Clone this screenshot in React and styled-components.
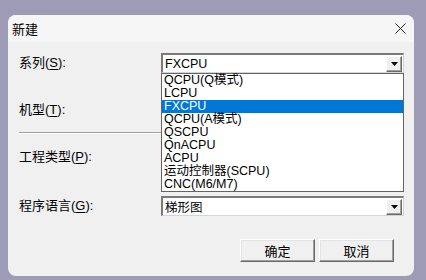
import styled, { createGlobalStyle } from 'styled-components';

const GlobalStyle = createGlobalStyle`
  html, body {
    margin: 0;
    padding: 0;
    background: #9e9bb7;
    font-family: "Liberation Sans", "Noto Sans CJK SC", sans-serif;
  }
`;

const Page = styled.div`
  width: 426px;
  height: 280px;
  padding: 15px 0 0 8px;
  box-sizing: border-box;
`;

const Dialog = styled.div`
  position: relative;
  width: 406px;
  height: 261px;
  background: #f0f0f0;
  border-radius: 8px;
  overflow: hidden;
  display: flex;
  flex-direction: column;
`;

const TitleBar = styled.div`
  height: 27px;
  display: flex;
  align-items: center;
  justify-content: space-between;
  padding: 0 8px 0 4px;
  background: #f6f6f6;
  font-size: 13px;
  color: #000;
`;

const Body = styled.div`
  display: flex;
  flex-direction: column;
  padding: 11px 10px 0 11px;
`;

const Row = styled.div`
  display: flex;
  align-items: center;
  height: 20px;
  margin-top: ${(p) => p.gap || 0}px;
`;

const Label = styled.div`
  width: 142px;
  font-size: 13px;
  color: #000;
  line-height: 20px;

  u {
    text-decoration: underline;
    text-underline-offset: 2px;
  }
`;

const Combo = styled.div`
  width: 243px;
  height: 20px;
  box-sizing: border-box;
  background: #fff;
  border-top: 2px solid #7a7a7a;
  border-left: 2px solid #7a7a7a;
  border-right: 1px solid #d4d4d4;
  border-bottom: 1px solid #d4d4d4;
  display: flex;
  align-items: center;
  justify-content: space-between;
  font-size: 12.5px;
  padding-left: 2px;
  color: #000;
`;

const ArrowButton = styled.div`
  width: 16px;
  height: 16px;
  box-sizing: border-box;
  background: #f0f0f0;
  border-top: 1px solid #fff;
  border-left: 1px solid #fff;
  border-right: 1px solid #696969;
  border-bottom: 1px solid #696969;
  box-shadow: inset -1px -1px 0 #a0a0a0;
  display: flex;
  align-items: center;
  justify-content: center;
  margin-right: 1px;
  margin-left: auto;
`;

const Separator = styled.div`
  width: 142px;
  height: 1px;
  background: #a0a0a0;
  border-bottom: 1px solid #fff;
  margin-top: 12px;
`;

const List = styled.div`
  position: absolute;
  left: 153px;
  top: 58px;
  width: 243px;
  box-sizing: border-box;
  background: #fff;
  border: 1px solid #646464;
`;

const Item = styled.div`
  height: 13px;
  line-height: 13px;
  font-size: 12.5px;
  padding-left: 2px;
  color: ${(p) => (p.active ? '#fff' : '#000')};
  background: ${(p) => (p.active ? '#0078d7' : 'transparent')};
  white-space: nowrap;
`;

const Buttons = styled.div`
  display: flex;
  justify-content: flex-end;
  gap: 4px;
  padding-right: 10px;
  margin-top: 23px;
`;

const Button = styled.div`
  width: 75px;
  height: 23px;
  box-sizing: border-box;
  background: #f0f0f0;
  border-top: 1px solid #fff;
  border-left: 1px solid #fff;
  border-right: 1px solid #696969;
  border-bottom: 1px solid #696969;
  box-shadow: inset -1px -1px 0 #a0a0a0, inset 1px 1px 0 #e3e3e3;
  display: flex;
  align-items: center;
  justify-content: center;
  font-size: 13px;
  color: #000;
`;

const Arrow = () => (
  <svg width="7" height="4" viewBox="0 0 7 4">
    <path d="M0 0H7L3.5 4Z" fill="#000" />
  </svg>
);

const Close = () => (
  <svg width="11" height="11" viewBox="0 0 11 11">
    <path d="M0.5 0.5L10.5 10.5M10.5 0.5L0.5 10.5" stroke="#222" strokeWidth="1" />
  </svg>
);

const series = [
  'QCPU(Q模式)',
  'LCPU',
  'FXCPU',
  'QCPU(A模式)',
  'QSCPU',
  'QnACPU',
  'ACPU',
  '运动控制器(SCPU)',
  'CNC(M6/M7)',
];

export default function App() {
  return (
    <Page>
      <GlobalStyle />
      <Dialog>
        <TitleBar>
          <span>新建</span>
          <Close />
        </TitleBar>
        <Body>
          <Row>
            <Label>系列(<u>S</u>):</Label>
            <Combo>
              FXCPU
              <ArrowButton><Arrow /></ArrowButton>
            </Combo>
          </Row>
          <Row gap={27}>
            <Label>机型(<u>T</u>):</Label>
            <Combo>
              <ArrowButton><Arrow /></ArrowButton>
            </Combo>
          </Row>
          <Separator />
          <Row gap={13}>
            <Label>工程类型(<u>P</u>):</Label>
            <Combo>
              <ArrowButton><Arrow /></ArrowButton>
            </Combo>
          </Row>
          <Row gap={29}>
            <Label>程序语言(<u>G</u>):</Label>
            <Combo>
              梯形图
              <ArrowButton><Arrow /></ArrowButton>
            </Combo>
          </Row>
          <Buttons>
            <Button>确定</Button>
            <Button>取消</Button>
          </Buttons>
        </Body>
        <List>
          {series.map((s) => (
            <Item key={s} active={s === 'FXCPU'}>{s}</Item>
          ))}
        </List>
      </Dialog>
    </Page>
  );
}
